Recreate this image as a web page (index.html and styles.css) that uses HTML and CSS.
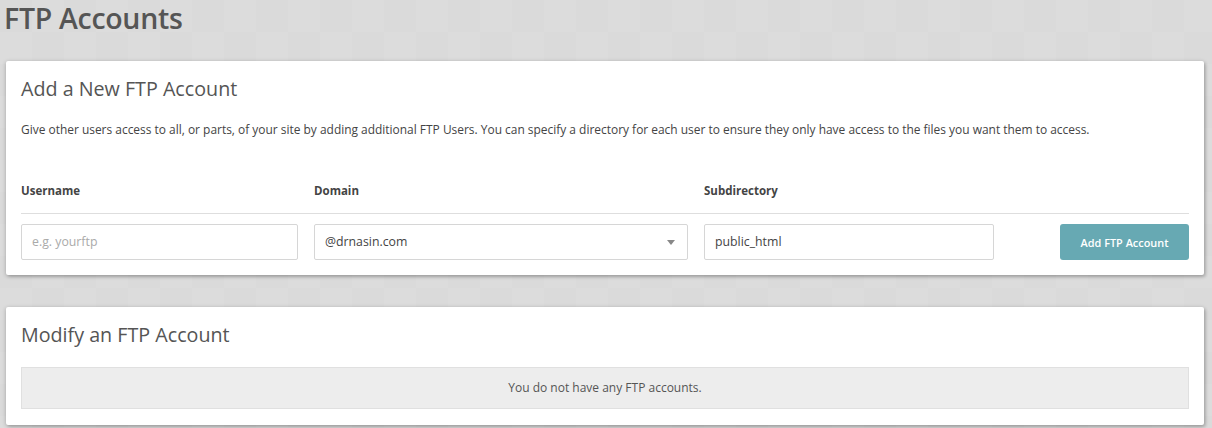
FILE: index.html
```html
<!DOCTYPE html>
<html>
<head>
<meta charset="utf-8">
<link rel="stylesheet" href="styles.css">
</head>
<body>
<div class="page">
  <h1 class="page-title">FTP Accounts</h1>
  <section class="card card-add">
    <h2 class="card-title">Add a New FTP Account</h2>
    <p class="desc">Give other users access to all, or parts, of your site by adding additional FTP Users. You can specify a directory for each user to ensure they only have access to the files you want them to access.</p>
    <div class="form-grid labels">
      <div class="label">Username</div>
      <div class="label">Domain</div>
      <div class="label">Subdirectory</div>
      <div></div>
    </div>
    <div class="form-grid fields">
      <div class="input placeholder">e.g. yourftp</div>
      <div class="input select">@drnasin.com<span class="caret"></span></div>
      <div class="input">public_html</div>
      <div class="btn-cell"><button class="btn">Add FTP Account</button></div>
    </div>
  </section>
  <section class="card card-mod">
    <h2 class="card-title">Modify an FTP Account</h2>
    <div class="empty">You do not have any FTP accounts.</div>
  </section>
</div>
</body>
</html>
```
FILE: styles.css
```css
html, body {
  margin: 0;
  padding: 0;
}
body {
  background-color: #dadada;
  background-image:
    linear-gradient(45deg, rgba(255,255,255,0.06) 25%, transparent 25%, transparent 75%, rgba(255,255,255,0.06) 75%),
    linear-gradient(45deg, rgba(255,255,255,0.06) 25%, transparent 25%, transparent 75%, rgba(255,255,255,0.06) 75%);
  background-size: 64px 64px;
  background-position: 0 0, 32px 32px;
  font-family: "Open Sans", "Noto Sans", sans-serif;
  color: #444;
  height: 428px;
  overflow: hidden;
}
.page {
  padding: 0 8px 0 6px;
}
.page-title {
  margin: 0 0 0 -2px;
  font-size: 28.5px;
  line-height: 36px;
  font-weight: 600;
  color: #555;
  letter-spacing: -0.3px;
}
.card {
  background: #fff;
  border-radius: 2px;
  box-shadow: 0 1px 4px rgba(0,0,0,0.25), 2px 2px 3px rgba(0,0,0,0.12);
  padding: 0 15px;
}
.card-add {
  margin-top: 25px;
  height: 214px;
  box-sizing: border-box;
}
.card-mod {
  margin-top: 32px;
  height: 118px;
  box-sizing: border-box;
}
.card-title {
  margin: 0;
  font-weight: 400;
  font-size: 19.7px;
  color: #555;
  line-height: 26px;
  padding-top: 15px;
}
.desc {
  margin: 0;
  margin-top: 20px;
  font-size: 11.95px;
  line-height: 16px;
  color: #444;
}
.form-grid {
  display: grid;
  grid-template-columns: 277px 374px 290px 1fr;
  column-gap: 16px;
}
.labels {
  margin-top: 45px;
  border-bottom: 1px solid #dedede;
  padding-bottom: 14px;
}
.label {
  font-size: 11.5px;
  font-weight: 700;
  color: #444;
  line-height: 16px;
}
.fields {
  margin-top: 10px;
}
.input {
  box-sizing: border-box;
  height: 36px;
  border: 1px solid #d6d6d6;
  border-radius: 2px;
  padding: 0 10px;
  font-size: 12.3px;
  line-height: 34px;
  color: #444;
  position: relative;
}
.placeholder {
  color: #aaa;
}
.caret {
  position: absolute;
  right: 12px;
  top: 15px;
  width: 0;
  height: 0;
  border-left: 4px solid transparent;
  border-right: 4px solid transparent;
  border-top: 5px solid #888;
}
.btn-cell {
  display: flex;
  justify-content: flex-end;
}
.btn {
  width: 129px;
  height: 36px;
  background: #67a9b3;
  border: none;
  border-radius: 3px;
  color: #fff;
  font-family: "Open Sans", "Noto Sans", sans-serif;
  font-weight: 600;
  font-size: 10.9px;
  padding: 0;
}
.card-mod .card-title {
  padding-top: 15px;
}
.empty {
  margin-top: 19px;
  height: 42px;
  box-sizing: border-box;
  background: #ededed;
  border: 1px solid #e0e0e0;
  text-align: center;
  font-size: 12px;
  line-height: 40px;
  color: #555;
}
```
